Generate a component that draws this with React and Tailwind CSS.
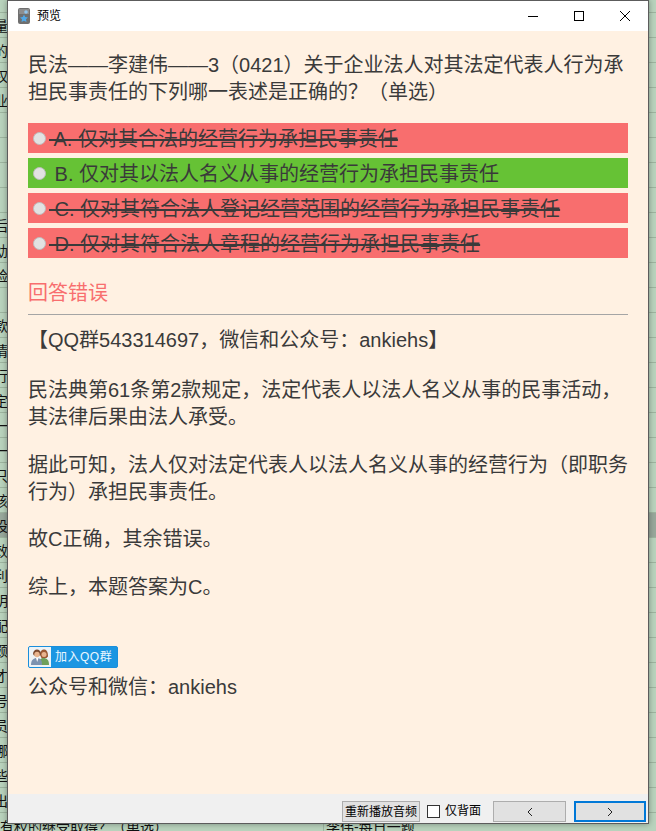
import React from "react";

const SANS = "font-['Liberation_Sans','Noto_Sans_CJK_SC',sans-serif]";

const sideChars = ["", "量", "的", "权", "业", "", "`", "`", "", "后", "幼", "脸", "·", "款", "情", "行", "定", "一", "一", "只", "孩", "设", "效", "利", "明", "配", "颇", "才", "号", "员", "哪", "些", "出"];

const options = [
  { label: "A. 仅对其合法的经营行为承担民事责任", ok: false },
  { label: "B. 仅对其以法人名义从事的经营行为承担民事责任", ok: true },
  { label: "C. 仅对其符合法人登记经营范围的经营行为承担民事责任", ok: false },
  { label: "D. 仅对其符合法人章程的经营行为承担民事责任", ok: false },
];

const Backdrop = () => (
  <div className={`h-[831px] overflow-hidden bg-[#b9d3bd] ${SANS}`}>
    <div className="-mt-[12px]">
      {sideChars.map((ch, idx) => (
        <div
          key={idx}
          className={`flex h-[25px] items-center border-b border-[#9db59f] pt-[3px] text-[14px] text-[#111] ${idx === 21 ? "bg-[#98a89b]" : ""}`}
        >
          <span className="-ml-[6px]">{ch}</span>
        </div>
      ))}
      <div className="flex h-[25px] items-center pt-[3px] text-[14px] text-[#111]">
        <span className="w-[323px] whitespace-nowrap">有权的继受取得？（单选）</span>
        <span className="whitespace-nowrap border-l border-[#9db59f] pl-[2px]">李伟-每日一题</span>
      </div>
    </div>
  </div>
);

const AppIcon = () => (
  <svg width="12" height="16" viewBox="0 0 12 16" className="shrink-0">
    <rect width="12" height="16" rx="2" fill="#6f6f6f" />
    <rect x="1" y="1" width="10" height="5" fill="#8d8d8d" />
    <circle cx="8" cy="4" r="1.800" fill="#8fc4ec" />
    <path d="M6 6.500l1.200 2.600 2.800.3-2 1.900.5 2.700L6 12.700 3.500 14l.5-2.700-2-1.900 2.800-.3z" fill="#4fa8e8" />
  </svg>
);

const TitleBar = () => (
  <div className="flex h-[30px] items-center bg-white pl-[10px] text-[12px] text-black">
    <AppIcon />
    <span className="ml-[7px]">预览</span>
    <div className="ml-auto flex items-center text-black">
      <svg width="46" height="30" viewBox="0 0 46 30">
        <path d="M18 15.500h10" stroke="#000" />
      </svg>
      <svg width="46" height="30" viewBox="0 0 46 30">
        <rect x="18.500" y="10.500" width="9" height="9" fill="none" stroke="#000" />
      </svg>
      <svg width="46" height="30" viewBox="0 0 46 30">
        <path d="M18 10l10 10M28 10L18 20" stroke="#000" fill="none" />
      </svg>
    </div>
  </div>
);

const Option = ({ label, ok }) => (
  <div className={`flex h-[30px] items-center pl-[5px] ${ok ? "bg-[#66c235]" : "bg-[#f86e6e]"}`}>
    <span className="h-[13px] w-[13px] shrink-0 rounded-full border border-[#bdbdbd] bg-[#e2e2e2]" />
    <span className={`ml-[3px] mt-[2px] whitespace-pre ${ok ? "" : "line-through decoration-2"}`}>{` ${label}`}</span>
  </div>
);

const QqBadge = () => (
  <div className="flex h-[22px] w-[90px] items-center overflow-hidden rounded-[2px] border border-[#1a8fdc] bg-[#1b96e2] text-[12px] tracking-[0.5px] text-[#eaf6ff]">
    <span className="flex h-full w-[22px] items-center justify-center bg-[#eef3f6]">
      <svg width="20" height="18" viewBox="0 0 20 18">
        <path d="M9 17c0-5 1-7 4.500-7S19 12 19 17z" fill="#6fa05c" />
        <path d="M10 7c0-4 2-5.500 4-5.500S18 3 18 8.500l-1.500 1.500h-5z" fill="#9c5a34" />
        <circle cx="14" cy="6.500" r="2.500" fill="#e8b48e" />
        <path d="M1 17c0-5 2.500-7 6-7s5 2 5 7z" fill="#7d93b0" />
        <path d="M6 10h2.500L7.200 14z" fill="#fff" />
        <path d="M3 6c0-3 2-4.500 4-4.500S11 3 11 6l-1 1.500H4z" fill="#7a4a30" />
        <circle cx="7" cy="6.500" r="2.700" fill="#e8b48e" />
      </svg>
    </span>
    <span className="ml-[4px] whitespace-nowrap">加入QQ群</span>
  </div>
);

const BottomBar = () => (
  <div className="flex h-[29px] items-end bg-[#f0f0f0] pb-px pl-[334px] text-[12px] text-black">
    <button type="button" className="h-[21px] w-[78px] whitespace-nowrap border border-[#adadad] bg-[#e1e1e1] leading-none">
      重新播放音频
    </button>
    <span className="mb-[4px] ml-[7px] h-[13px] w-[13px] shrink-0 border border-[#333] bg-white" />
    <span className="mb-[2px] ml-[5px] whitespace-nowrap leading-[17px]">仅背面</span>
    <button type="button" className="ml-[12px] flex h-[21px] w-[73px] items-center justify-center border border-[#adadad] bg-[#e1e1e1]">
      <svg width="8" height="10" viewBox="0 0 8 10">
        <path d="M6 1L2 5l4 4" fill="none" stroke="#222" />
      </svg>
    </button>
    <button type="button" className="ml-[8px] flex h-[21px] w-[72px] items-center justify-center border-2 border-[#0078d7] bg-[#e1e1e1]">
      <svg width="8" height="10" viewBox="0 0 8 10">
        <path d="M2 1l4 4-4 4" fill="none" stroke="#222" />
      </svg>
    </button>
  </div>
);

export default function App() {
  return (
    <div className="relative h-[831px] w-[656px] overflow-hidden">
      <Backdrop />
      <div className={`absolute left-[7px] top-0 flex h-[824px] w-[642px] flex-col border border-[#5c5c5c] shadow-[0_0_6px_rgba(0,0,0,0.35)] ${SANS}`}>
        <TitleBar />
        <div className="flex-1 bg-[#fff1e2] px-[20px] pt-[21px] text-[20px] leading-[27px] text-[#3a3a3a]">
          <p>民法——李建伟——3（0421）关于企业法人对其法定代表人行为承担民事责任的下列哪一表述是正确的？（单选）</p>
          <div className="mt-[17px] flex flex-col gap-[5px]">
            {options.map((opt) => (
              <Option key={opt.label} label={opt.label} ok={opt.ok} />
            ))}
          </div>
          <div className="mt-[21px] text-[20px] leading-[28px] text-[#f86e6e]">回答错误</div>
          <hr className="mt-[7px] border-t border-[#a5a5a5]" />
          <p className="mt-[12px]">【QQ群543314697，微信和公众号：ankiehs】</p>
          <p className="mt-[23px]">民法典第61条第2款规定，法定代表人以法人名义从事的民事活动，其法律后果由法人承受。</p>
          <p className="mt-[21px]">据此可知，法人仅对法定代表人以法人名义从事的经营行为（即职务行为）承担民事责任。</p>
          <p className="mt-[20px]">故C正确，其余错误。</p>
          <p className="mt-[21px]">综上，本题答案为C。</p>
          <div className="mt-[45px]">
            <QqBadge />
          </div>
          <p className="mt-[6px]">公众号和微信：ankiehs</p>
        </div>
        <BottomBar />
      </div>
    </div>
  );
}
